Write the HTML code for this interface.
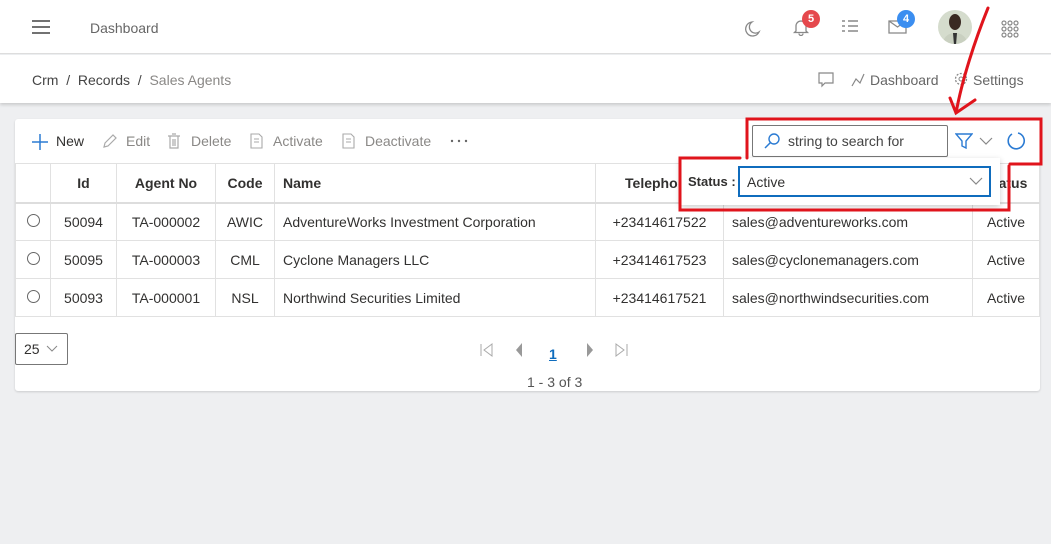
<!DOCTYPE html>
<html><head><style>
*{box-sizing:border-box;margin:0;padding:0}
body{width:1051px;height:544px;background:#eeeff1;font-family:"Liberation Sans",sans-serif;font-size:14px;color:#323130;position:relative;overflow:hidden}
.abs{position:absolute}
.hdr{left:0;top:0;width:1051px;height:54px;background:#fff;border-bottom:1px solid #ddd}
.bc{left:0;top:55px;width:1051px;height:48px;background:#fff;box-shadow:0 2px 3px rgba(0,0,0,.15)}
.card{left:15px;top:119px;width:1025px;height:272px;background:#fff;border-radius:3px;box-shadow:0 1px 2px rgba(0,0,0,.15)}
table{border-collapse:collapse;position:absolute;left:15px;top:163px;width:1025px}
td,th{border:1px solid #e1e1e1;height:38px;font-size:14px;padding:0 8px;white-space:nowrap}
th{font-weight:bold;height:39px;border-bottom:2px solid #ddd}
.c{text-align:center}
.gray{color:#8a8886}
.badge{width:18px;height:18px;border-radius:9px;color:#fff;font-size:11px;font-weight:bold;text-align:center;line-height:18px}
.radio{display:inline-block;width:13px;height:13px;border:1px solid #666;border-radius:50%}
</style></head><body>
<div class="abs hdr"></div>
<svg class="abs" style="left:31px;top:19px" width="20" height="16"><path d="M1 2H19M1 8H19M1 14H19" stroke="#444" stroke-width="1.6"/></svg>
<div class="abs gray" style="left:90px;top:20px;font-size:14px;color:#666">Dashboard</div>
<svg class="abs" style="left:743px;top:20px" width="18" height="18"><path d="M9 2A7 7 0 1 0 16 12 6 6 0 0 1 9 2Z" fill="none" stroke="#888" stroke-width="1.3"/></svg>
<svg class="abs" style="left:792px;top:18px" width="18" height="18"><path d="M4 13V8a5 5 0 0 1 10 0v5l1.5 1.5H2.5ZM7 15.5a2 2 0 0 0 4 0" fill="none" stroke="#888" stroke-width="1.3"/></svg>
<div class="abs badge" style="left:802px;top:10px;background:#e5484d">5</div>
<svg class="abs" style="left:841px;top:19px" width="18" height="16"><path d="M1 2h3M1 7h3M1 12h3M7 2h10M7 7h10M7 12h10" stroke="#888" stroke-width="1.4"/></svg>
<svg class="abs" style="left:888px;top:18px" width="20" height="16"><path d="M1 3h17v12H1ZM1 3l8.5 6L18 3" fill="none" stroke="#888" stroke-width="1.3"/></svg>
<div class="abs badge" style="left:897px;top:10px;background:#3b8ef0">4</div>
<svg class="abs" style="left:938px;top:9px" width="34" height="36"><defs><clipPath id="cp"><circle cx="17" cy="18" r="17"/></clipPath></defs><g clip-path="url(#cp)"><rect width="34" height="36" fill="#d5dccd"/><ellipse cx="17" cy="13" rx="6" ry="8" fill="#3a2a22"/><path d="M4 36C6 26 12 24 17 24S28 26 30 36Z" fill="#c9d0c0"/><path d="M15 24h4l-1 12h-2Z" fill="#333"/></g></svg>
<svg class="abs" style="left:1001px;top:20px" width="18" height="18"><g fill="none" stroke="#888" stroke-width="1.2"><circle cx="3" cy="3" r="2"/><circle cx="9" cy="3" r="2"/><circle cx="15" cy="3" r="2"/><circle cx="3" cy="9" r="2"/><circle cx="9" cy="9" r="2"/><circle cx="15" cy="9" r="2"/><circle cx="3" cy="15" r="2"/><circle cx="9" cy="15" r="2"/><circle cx="15" cy="15" r="2"/></g></svg>

<div class="abs bc"></div>
<div class="abs" style="left:32px;top:72px;color:#444">Crm &nbsp;/ &nbsp;Records &nbsp;/ &nbsp;<span class="gray">Sales Agents</span></div>
<svg class="abs" style="left:818px;top:72px" width="16" height="16"><path d="M1 1h14v10H7l-3 3v-3H1Z" fill="none" stroke="#888" stroke-width="1.2"/></svg>
<svg class="abs" style="left:850px;top:72px" width="16" height="16"><path d="M2 14L6 7l4 4 4-9" fill="none" stroke="#888" stroke-width="1.2"/></svg>
<div class="abs" style="left:870px;top:72px;color:#666">Dashboard</div>
<svg class="abs" style="left:953px;top:71px" width="16" height="16"><circle cx="8" cy="8" r="5.5" fill="none" stroke="#888" stroke-width="1.3" stroke-dasharray="2 1.5"/><circle cx="8" cy="8" r="2" fill="none" stroke="#888"/></svg>
<div class="abs" style="left:973px;top:72px;color:#666">Settings</div>

<div class="abs card"></div>
<svg class="abs" style="left:31px;top:133px" width="18" height="18"><path d="M9 1v16M1 9h16" stroke="#2b7bd3" stroke-width="1.5"/></svg>
<div class="abs" style="left:56px;top:133px">New</div>
<svg class="abs" style="left:102px;top:133px" width="16" height="16"><path d="M2 14l1-4 8-8 3 3-8 8Z" fill="none" stroke="#aaa" stroke-width="1.2"/></svg>
<div class="abs gray" style="left:126px;top:133px">Edit</div>
<svg class="abs" style="left:167px;top:133px" width="14" height="16"><path d="M1 3h12M3 3v12h8V3M5 1h4M6 6v7M8 6v7" fill="none" stroke="#aaa" stroke-width="1.2"/></svg>
<div class="abs gray" style="left:191px;top:133px">Delete</div>
<svg class="abs" style="left:249px;top:133px" width="16" height="16"><path d="M2 1h8l3 3v11H2ZM5 6h5M5 9h5" fill="none" stroke="#aaa" stroke-width="1.1"/></svg>
<div class="abs gray" style="left:273px;top:133px">Activate</div>
<svg class="abs" style="left:341px;top:133px" width="16" height="16"><path d="M2 1h8l3 3v11H2ZM5 6h5M5 9h5" fill="none" stroke="#aaa" stroke-width="1.1"/></svg>
<div class="abs gray" style="left:365px;top:133px">Deactivate</div>
<svg class="abs" style="left:450px;top:139px" width="18" height="4"><g fill="#666"><circle cx="2" cy="2" r="1.2"/><circle cx="9" cy="2" r="1.2"/><circle cx="16" cy="2" r="1.2"/></g></svg>

<div class="abs" style="left:752px;top:125px;width:196px;height:32px;border:1px solid #777;border-radius:2px"></div>
<svg class="abs" style="left:763px;top:132px" width="18" height="18"><circle cx="11" cy="7" r="5" fill="none" stroke="#2b7bd3" stroke-width="1.4"/><path d="M7.5 10.5L2 16" stroke="#2b7bd3" stroke-width="1.5"/></svg>
<div class="abs" style="left:788px;top:133px;color:#444">string to search for</div>
<svg class="abs" style="left:955px;top:133px" width="18" height="16"><path d="M1 1h16l-6 7v7l-4-2V8Z" fill="none" stroke="#2b7bd3" stroke-width="1.4"/></svg>
<svg class="abs" style="left:979px;top:137px" width="14" height="8"><path d="M1 1l6 6 6-6" fill="none" stroke="#888" stroke-width="1.2"/></svg>
<svg class="abs" style="left:1006px;top:131px" width="20" height="20"><path d="M6 3A8 8 0 1 0 12 2" fill="none" stroke="#2b7bd3" stroke-width="1.6"/></svg>

<table>
<tr><th style="width:35px"></th><th style="width:66px">Id</th><th style="width:99px">Agent No</th><th style="width:59px">Code</th><th style="text-align:left;width:321px">Name</th><th style="width:128px">Telephone</th><th style="text-align:left;width:249px">Email</th><th>Status</th></tr>
<tr><td class="c"><span class="radio"></span></td><td class="c">50094</td><td class="c">TA-000002</td><td class="c">AWIC</td><td>AdventureWorks Investment Corporation</td><td class="c">+23414617522</td><td>sales@adventureworks.com</td><td class="c">Active</td></tr>
<tr><td class="c"><span class="radio"></span></td><td class="c">50095</td><td class="c">TA-000003</td><td class="c">CML</td><td>Cyclone Managers LLC</td><td class="c">+23414617523</td><td>sales@cyclonemanagers.com</td><td class="c">Active</td></tr>
<tr><td class="c"><span class="radio"></span></td><td class="c">50093</td><td class="c">TA-000001</td><td class="c">NSL</td><td>Northwind Securities Limited</td><td class="c">+23414617521</td><td>sales@northwindsecurities.com</td><td class="c">Active</td></tr>
</table>

<div class="abs" style="left:680px;top:158px;width:320px;height:47px;background:#fff;box-shadow:0 2px 6px rgba(0,0,0,.2)"></div>
<div class="abs" style="left:688px;top:174px;font-weight:bold;font-size:13px">Status :</div>
<div class="abs" style="left:738px;top:166px;width:253px;height:31px;border:2px solid #0f6cbd"></div>
<div class="abs" style="left:747px;top:174px">Active</div>
<svg class="abs" style="left:969px;top:177px" width="14" height="8"><path d="M1 1l6 6 6-6" fill="none" stroke="#888" stroke-width="1.2"/></svg>

<div class="abs" style="left:15px;top:333px;width:53px;height:32px;border:1px solid #777;border-radius:2px"></div>
<div class="abs" style="left:24px;top:341px">25</div>
<svg class="abs" style="left:46px;top:345px" width="12" height="7"><path d="M1 1l5 5 5-5" fill="none" stroke="#888"/></svg>
<svg class="abs" style="left:479px;top:342px" width="150" height="16"><path d="M2 2v12M13 2L5 8l8 6Z" fill="none" stroke="#aaa"/><path d="M43 1L37 8l6 7Z" fill="#999"/><path d="M108 1l6 7-6 7Z" fill="#999"/><path d="M137 2l8 6-8 6ZM148 2v12" fill="none" stroke="#aaa"/></svg>
<div class="abs" style="left:549px;top:346px;color:#0f6cbd;font-weight:bold;text-decoration:underline">1</div>
<div class="abs" style="left:527px;top:374px;color:#555">1 - 3 of 3</div>

<svg class="abs" style="left:0;top:0" width="1051" height="544"><g fill="none" stroke="#e0141c" stroke-width="3" stroke-linecap="round">
<path d="M747 158V119H1041V164H1010"/>
<path d="M740 158H680V210H1009V166"/>
<path d="M988 8C975 40 962 80 956 113M950 98L956 113 975 100"/>
</g></svg>
</body></html>
